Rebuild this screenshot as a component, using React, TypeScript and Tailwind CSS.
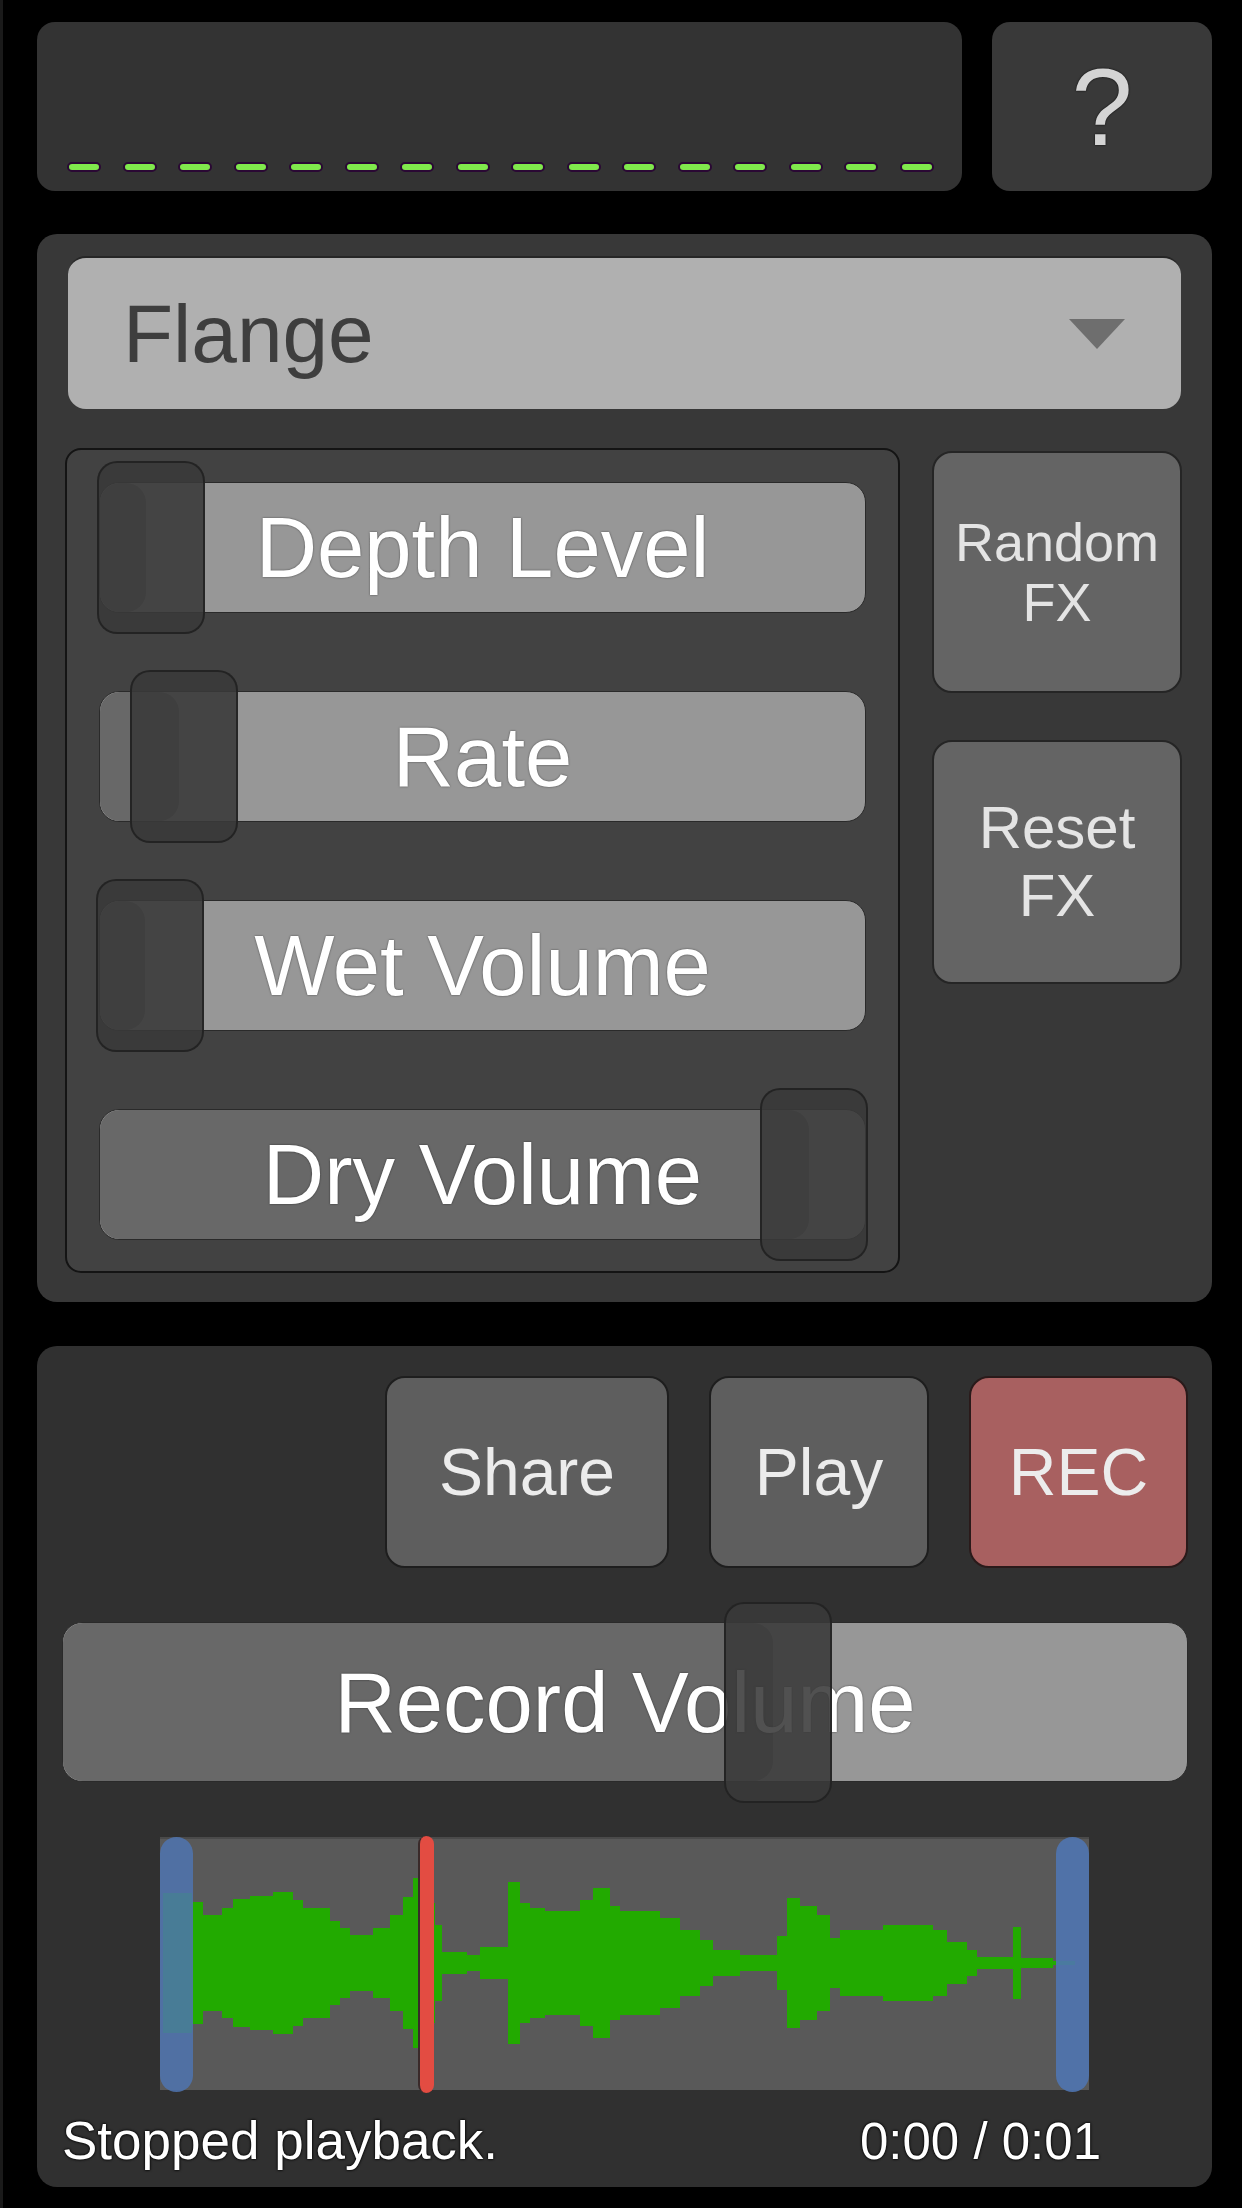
import React from "react";

type SliderProps = {
  label: string;
  height: number;
  thumbLeft: number;
  fill: number;
  thumbH: number;
};

// slider: light track, darker fill up to the knob, label, translucent knob on top
function Slider({ label, height, thumbLeft, fill, thumbH }: SliderProps) {
  const over = (thumbH - height) / 2;
  return (
    <div
      className="relative w-full rounded-[20px] bg-[#979797] border border-[#2a2a2a]"
      style={{ height }}
    >
      <div
        className="absolute left-0 top-0 bottom-0 rounded-[20px] bg-[#686868]"
        style={{ width: fill }}
      />
      <div className="absolute inset-0 flex items-center justify-center text-[85px] leading-none text-white [text-shadow:0_0_2px_rgba(0,0,0,0.6)]">
        {label}
      </div>
      <div
        className="absolute w-[108px] rounded-[20px] bg-[rgba(57,57,57,0.88)] border-2 border-[rgba(30,30,30,0.8)]"
        style={{ left: thumbLeft, top: -over - 1, height: thumbH }}
      />
    </div>
  );
}

// [x0, x1, amplitude] in px, relative to the waveform box
const wave: [number, number, number][] = [
  [3, 32, 70], [32, 43, 61], [43, 62, 48], [62, 73, 55], [73, 90, 64], [90, 113, 67],
  [113, 133, 71], [133, 143, 63], [143, 170, 55], [170, 180, 42], [180, 190, 35],
  [190, 213, 28], [213, 230, 35], [230, 243, 48], [243, 253, 66], [253, 258, 85],
  [258, 275, 60], [275, 282, 38], [282, 307, 11], [307, 320, 8], [320, 348, 16],
  [348, 360, 81], [360, 370, 60], [370, 385, 55], [385, 420, 52], [420, 433, 63],
  [433, 450, 75], [450, 460, 57], [460, 500, 52], [500, 520, 45], [520, 540, 33],
  [540, 553, 23], [553, 580, 13], [580, 617, 8], [617, 627, 27], [627, 640, 65],
  [640, 657, 57], [657, 670, 48], [670, 680, 25], [680, 723, 33], [723, 773, 38],
  [773, 787, 33], [787, 807, 21], [807, 817, 13], [817, 853, 6], [853, 861, 36],
  [861, 893, 5], [893, 915, 2],
];

function Waveform() {
  const c = 126;
  const d = wave
    .map(([a, b, h]) => `M${a} ${c - h}H${b}V${c + h}H${a}Z`)
    .join("");
  return (
    <div className="relative ml-[98px] mt-[55px] w-[929px] h-[253px] bg-[#595959] border-t-2 border-[#4a4a4a]">
      <svg width="929" height="253" className="absolute left-0 top-[-2px]">
        <path d={d} fill="#22aa00" />
      </svg>
      <div className="absolute left-0 top-[-2px] w-[33px] h-[255px] rounded-full bg-[#4f74b0] opacity-85" />
      <div className="absolute left-[258px] top-[-3px] w-[16px] h-[257px] rounded-full bg-[#e34c42] border-l-2 border-[#3a2a2a]" />
      <div className="absolute right-0 top-[-2px] w-[33px] h-[255px] rounded-full bg-[#4f74b0] opacity-90" />
    </div>
  );
}

export default function App() {
  const dashes = Array.from({ length: 16 });
  return (
    <div className="w-[1242px] h-[2208px] bg-black border-l-[3px] border-[#1a1a1a] pl-[34px] pr-[30px] pt-[22px] [font-family:'Liberation_Sans',Arial,sans-serif]">
      {/* top row */}
      <div className="flex gap-[30px] h-[169px]">
        <div className="flex-1 rounded-[18px] bg-[#333333] flex flex-col justify-end pb-[19px] pl-[30px]">
          <div className="flex gap-[21.5px]">
            {dashes.map((_, i) => (
              <div
                key={i}
                className="w-[34px] h-[10px] rounded-full bg-[#80e84c] border-[2.5px] border-[#2a0834]"
              />
            ))}
          </div>
        </div>
        <div className="w-[220px] rounded-[18px] bg-[#393939] flex items-center justify-center text-[110px] leading-none text-[#d4d4d4] [text-shadow:0_0_2px_#000]">
          ?
        </div>
      </div>

      {/* effect panel */}
      <div className="mt-[43px] h-[1068px] rounded-[20px] bg-[#383838] px-[28px] pt-[22px]">
        <div className="mx-[3px] h-[153px] rounded-[18px] bg-[#b0b0b0] border-t-2 border-[#262626] flex items-center justify-between pl-[55px] pr-[56px]">
          <span className="text-[82px] leading-none text-[#3e3e3e]">Flange</span>
          <svg width="56" height="30" viewBox="0 0 56 30">
            <path d="M0 0H56L28 30Z" fill="#6e6e6e" />
          </svg>
        </div>
        <div className="mt-[39px] flex gap-[32px]">
          <div className="w-[835px] h-[825px] rounded-[16px] border-2 border-[#141414] bg-[#424242] pt-[32px] px-[32px] flex flex-col gap-[78px]">
            <Slider label="Depth Level" height={131} thumbLeft={-3} fill={46} thumbH={173} />
            <Slider label="Rate" height={131} thumbLeft={30} fill={79} thumbH={173} />
            <Slider label="Wet Volume" height={131} thumbLeft={-4} fill={45} thumbH={173} />
            <Slider label="Dry Volume" height={131} thumbLeft={660} fill={709} thumbH={173} />
          </div>
          <div className="w-[250px] pt-[3px] flex flex-col gap-[47px]">
            <div className="h-[242px] rounded-[20px] bg-[#646464] border-2 border-[#252525] flex flex-col items-center justify-center text-[54px] leading-[60px] text-[#e4e4e4]">
              <span>Random</span>
              <span>FX</span>
            </div>
            <div className="h-[244px] rounded-[20px] bg-[#646464] border-2 border-[#252525] flex flex-col items-center justify-center text-[60px] leading-[68px] text-[#e4e4e4]">
              <span>Reset</span>
              <span>FX</span>
            </div>
          </div>
        </div>
      </div>

      {/* recorder panel */}
      <div className="mt-[44px] h-[841px] rounded-[20px] bg-[#303030] pl-[25px] pr-[24px] pt-[30px]">
        <div className="flex justify-end gap-[40px] text-[66px] leading-none text-[#ececec]">
          <div className="w-[284px] h-[192px] rounded-[20px] bg-[#5e5e5e] border-2 border-[#1e1e1e] flex items-center justify-center">
            Share
          </div>
          <div className="w-[220px] h-[192px] rounded-[20px] bg-[#5e5e5e] border-2 border-[#1e1e1e] flex items-center justify-center">
            Play
          </div>
          <div className="w-[219px] h-[192px] rounded-[20px] bg-[#a86060] border-2 border-[#2a1a1a] flex items-center justify-center">
            REC
          </div>
        </div>
        <div className="mt-[54px]">
          <Slider label="Record Volume" height={160} thumbLeft={661} fill={710} thumbH={201} />
        </div>
        <Waveform />
        <div className="mt-[20px] flex items-baseline justify-between pr-[87px] leading-[62px] text-white [text-shadow:0_0_3px_#000,0_0_2px_#000]">
          <span className="text-[53px]">Stopped playback.</span>
          <span className="text-[51px]">0:00 / 0:01</span>
        </div>
      </div>
    </div>
  );
}
